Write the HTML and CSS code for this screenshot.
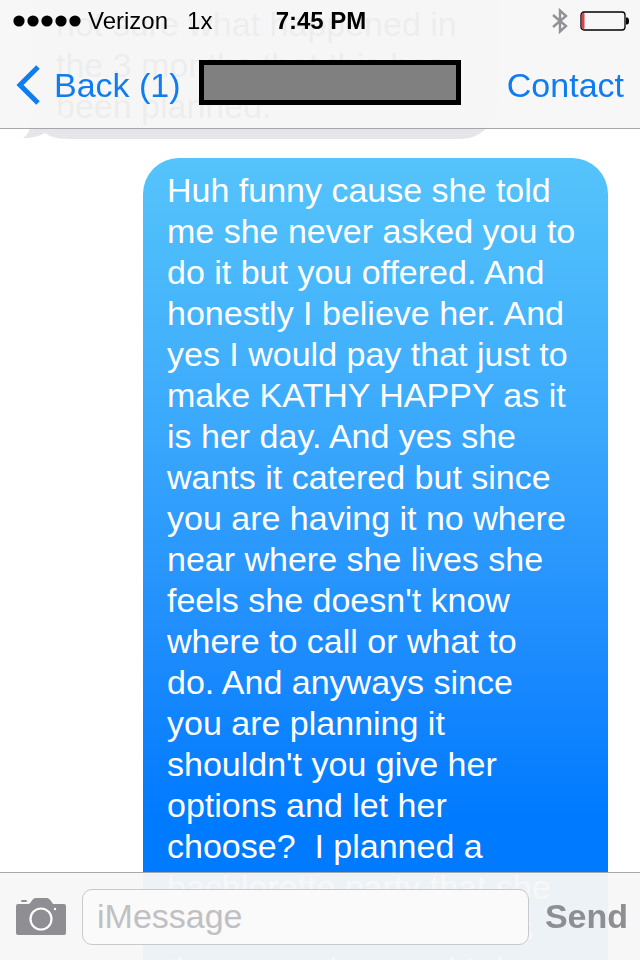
FILE: index.html
```
<!DOCTYPE html>
<html lang="en">
<head>
    <meta charset="UTF-8">
    <meta name="viewport" content="width=device-width, initial-scale=1.0">
    <title>Messages</title>
    <link rel="stylesheet" href="styles.css">
</head>
<body>
    <header class="topbar">
        <div class="status">
            <div class="carrier">
                <svg class="signal" width="68" height="12" viewBox="0 0 68 12">
                    <circle cx="6" cy="6" r="5.6"/>
                    <circle cx="20" cy="6" r="5.6"/>
                    <circle cx="34" cy="6" r="5.6"/>
                    <circle cx="48" cy="6" r="5.6"/>
                    <circle cx="62" cy="6" r="5.6"/>
                </svg>
                <span>Verizon</span>
                <span class="network">1x</span>
            </div>
            <time class="clock">7:45 PM</time>
            <div class="power">
                <svg width="16" height="26" viewBox="0 0 16 26" fill="none" stroke="#929296" stroke-width="2.4">
                    <path d="M1 7L14 18L8 23.5V2.5L14 8L1 19"/>
                </svg>
                <svg width="49" height="20" viewBox="0 0 49 20">
                    <rect x="1" y="1" width="44" height="18" rx="3" fill="none" stroke="#000" stroke-width="1.3"/>
                    <rect x="2" y="2" width="2.5" height="16" rx="1" fill="#d8434c"/>
                    <path d="M46 6.500h1q2 0 2 3.500t-2 3.500h-1z"/>
                </svg>
            </div>
        </div>
        <nav class="nav">
            <a class="back" href="#">
                <svg width="24" height="40" viewBox="0 0 24 40" fill="none" stroke="#0f7cf0" stroke-width="5">
                    <path d="M22 2L4 20L22 38"/>
                </svg>
                Back (1)
            </a>
            <div class="name"></div>
            <a class="contact" href="#">Contact</a>
        </nav>
    </header>

    <main class="thread">
        <div class="bubble received">
            not sure what happened in<br>
            the 3 months that this has<br>
            been planned.
            <svg class="tail" width="40" height="24" viewBox="0 0 40 24">
                <path d="M8 0C9 12 6 19 0 23C9 23 17 21 22 18C27 22 34 23 40 24V0z" fill="#e5e5ea"/>
            </svg>
        </div>
        <div class="bubble sent">
            Huh funny cause she told<br>
            me she never asked you to<br>
            do it but you offered. And<br>
            honestly I believe her. And<br>
            yes I would pay that just to<br>
            make KATHY HAPPY as it<br>
            is her day. And yes she<br>
            wants it catered but since<br>
            you are having it no where<br>
            near where she lives she<br>
            feels she doesn't know<br>
            where to call or what to<br>
            do. And anyways since<br>
            you are planning it<br>
            shouldn't you give her<br>
            options and let her<br>
            choose?&nbsp; I planned a<br>
            bachlorette party that she<br>
            wanted and it was for us<br>
            them a and we and I do
        </div>
    </main>

    <form class="compose">
        <button class="camera" type="button" aria-label="Camera">
            <svg width="50" height="38" viewBox="0 0 50 38">
                <path d="M2 6H12Q14 6 15 4Q17 0 20 0H31Q33 0 35 3L37 6H48Q50 6 50 8V35Q50 37 48 37H2Q0 37 0 35V8Q0 6 2 6z" fill="#8e8e93"/>
                <rect x="5" y="2" width="6" height="2" rx="1" fill="#8e8e93"/>
                <circle cx="25" cy="21" r="10.5" fill="none" stroke="#fff" stroke-width="2.2"/>
                <circle cx="39" cy="11" r="1.2" fill="#fff"/>
            </svg>
        </button>
        <input class="message" type="text" placeholder="iMessage" aria-label="iMessage">
        <button class="send" type="submit">Send</button>
    </form>
</body>
</html>
```
FILE: styles.css
```
*{
    box-sizing: border-box;
}
body{
    margin: 0;
    height: 100vh;
    overflow: hidden;
    background-color: white;
    font-family: "Liberation Sans", Arial, sans-serif;
}

/* status bar and navigation */
.topbar{
    position: fixed;
    top: 0;
    left: 0;
    right: 0;
    z-index: 1;
    background-color: rgba(247, 247, 247, 0.96);
    border-bottom: 1px solid #a7a7aa;
}
.status{
    display: grid;
    grid-template-columns: 1fr auto 1fr;
    align-items: center;
    height: 42px;
    padding: 0 11px 0 13px;
    font-size: 24px;
}
.carrier{
    display: flex;
    align-items: center;
    gap: 7px;
}
.network{
    margin-left: 12px;
}
.clock{
    font-weight: bold;
}
.power{
    display: flex;
    align-items: center;
    justify-content: flex-end;
    gap: 12px;
}
.nav{
    display: flex;
    align-items: center;
    height: 86px;
    padding: 0 16px;
    font-size: 34px;
}
.nav a{
    color: #0f7cf0;
    text-decoration: none;
}
.back{
    display: flex;
    align-items: center;
    gap: 14px;
}
.name{
    flex: 1;
    height: 45px;
    margin: 0 46px 6px 18px;
    background-color: #808080;
    border: 5px solid black;
}

/* messages */
.thread{
    display: flex;
    flex-direction: column;
    gap: 19px;
    padding: 0 32px;
}
.bubble{
    position: relative;
    width: 465px;
    max-width: 100%;
    padding: 12px 24px;
    border-radius: 36px;
    font-size: 34px;
    line-height: 41px;
    white-space: nowrap;
}
.received{
    padding-top: 4px;
    border-top-left-radius: 0;
    border-top-right-radius: 0;
    background-color: #e5e5ea;
    color: black;
}
.tail{
    position: absolute;
    left: -9px;
    bottom: 0;
}
.sent{
    align-self: flex-end;
    background: linear-gradient(#55c4fb, #3dabfc 250px, #1f8dfd 480px, #007aff 660px);
    color: white;
}

/* text box at the bottom */
.compose{
    position: fixed;
    bottom: 0;
    left: 0;
    right: 0;
    display: flex;
    align-items: center;
    gap: 16px;
    height: 88px;
    padding: 0 12px 0 16px;
    background-color: rgba(247, 247, 247, 0.96);
    border-top: 1px solid #a7a7aa;
}
.compose button{
    padding: 0;
    border: none;
    background: none;
}
.camera svg{
    display: block;
}
.message{
    flex: 1;
    min-width: 0;
    height: 56px;
    padding: 0 14px;
    border: 1px solid #c8c8cd;
    border-radius: 10px;
    background-color: #fafafa;
    font-family: inherit;
    font-size: 34px;
}
.message::placeholder{
    color: #c0c0c3;
}
.compose .send{
    color: #8e8e93;
    font-family: inherit;
    font-size: 34px;
    font-weight: bold;
}
```
